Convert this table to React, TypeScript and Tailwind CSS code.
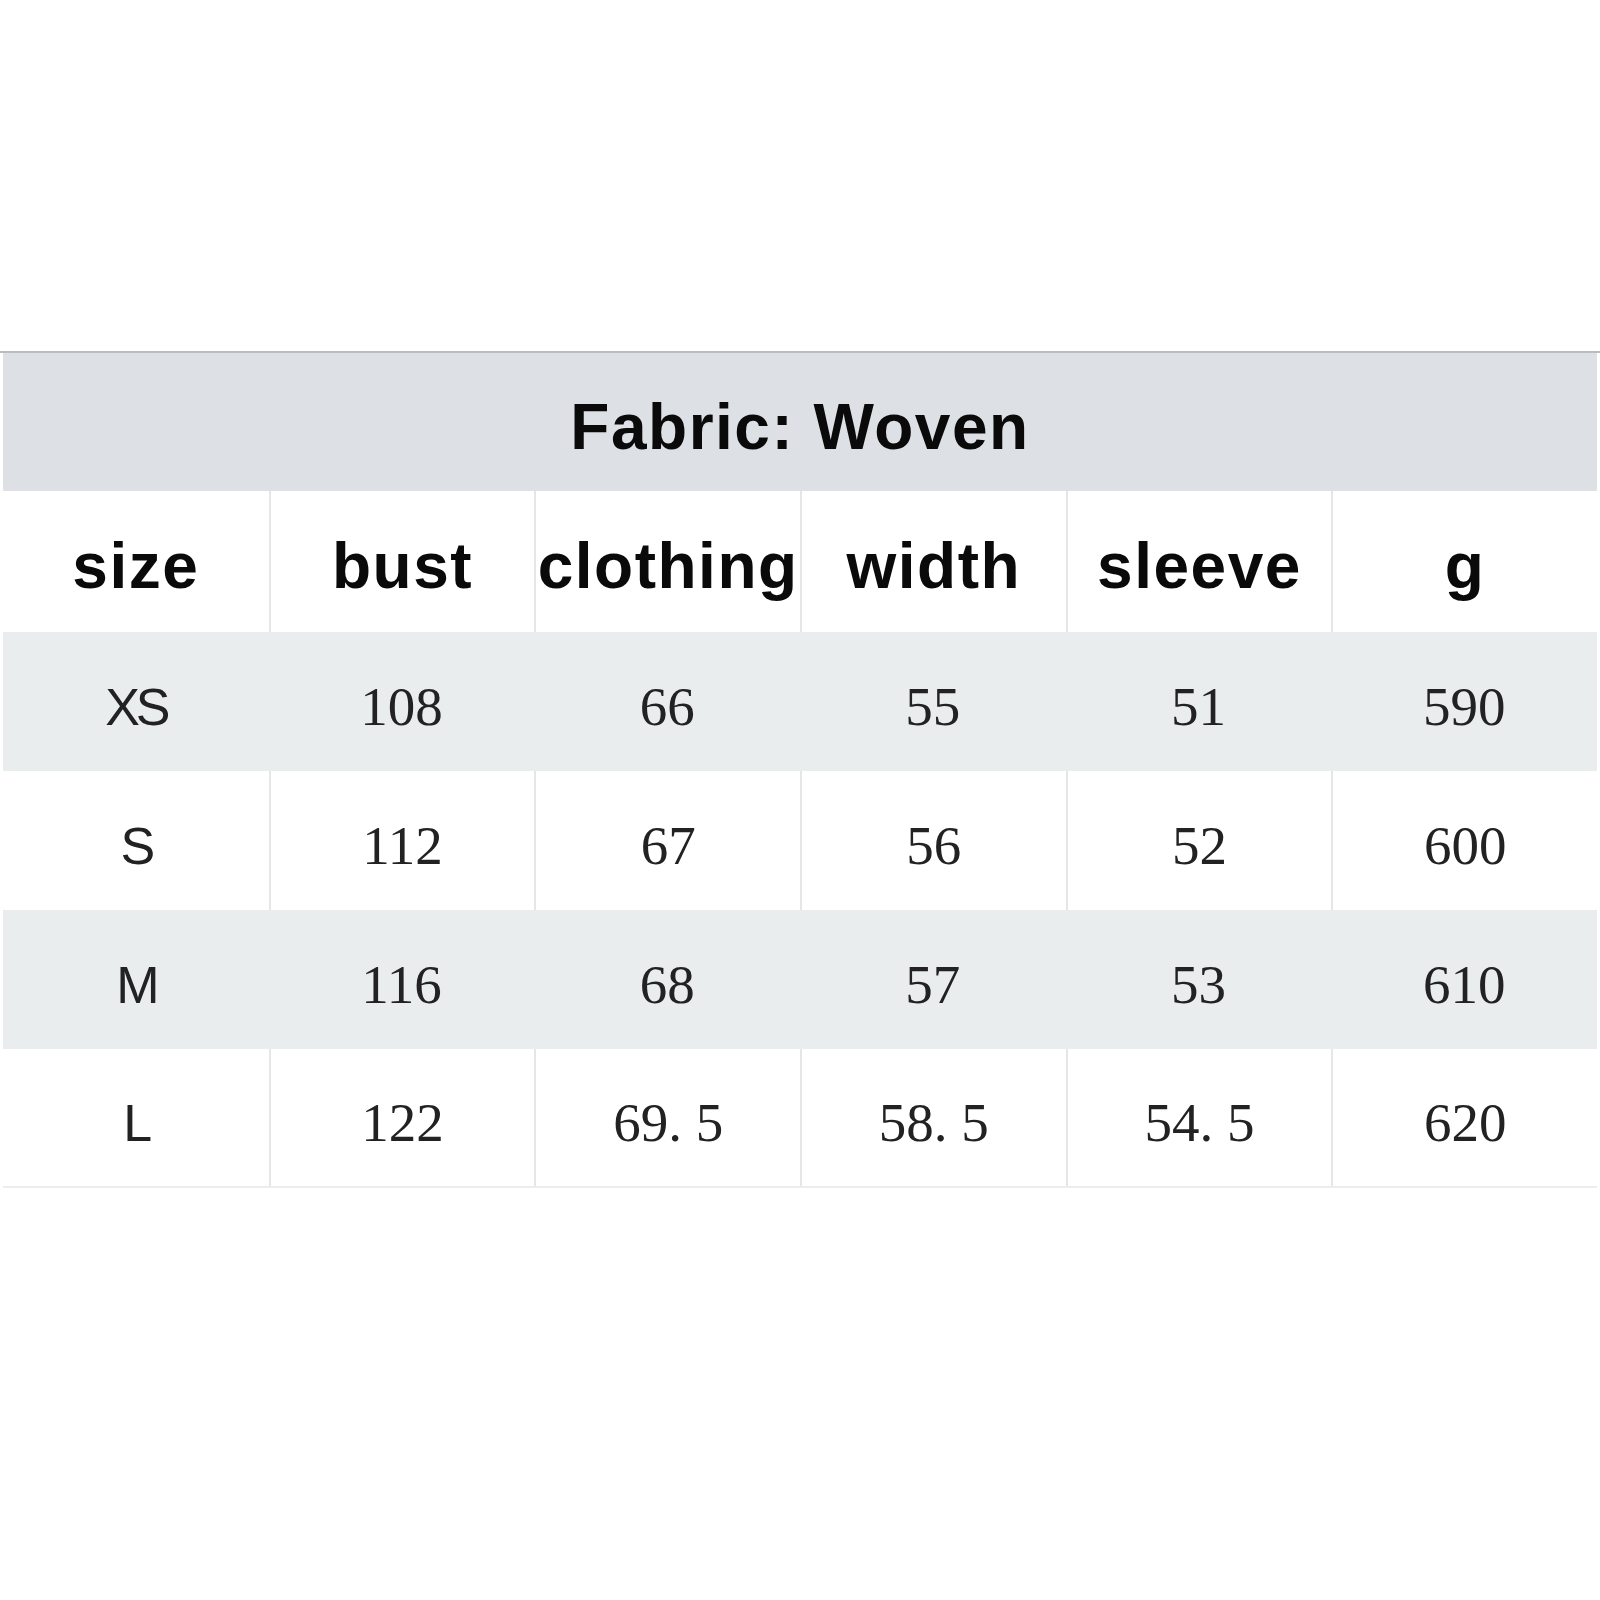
const headers = ['size', 'bust', 'clothing', 'width', 'sleeve', 'g'];

const rows = [
  { size: 'XS', values: ['108', '66', '55', '51', '590'] },
  { size: 'S', values: ['112', '67', '56', '52', '600'] },
  { size: 'M', values: ['116', '68', '57', '53', '610'] },
  { size: 'L', values: ['122', '69. 5', '58. 5', '54. 5', '620'] },
];

export default function App() {
  return (
    <div className="w-[1600px] h-[1600px] bg-white pt-[351px]">
      <div className="h-[2px] bg-[#bcbcbc]" />
      <div className="px-[3px]">
        <div className="h-[138px] bg-[#dde1e5] flex items-center justify-center">
          <span className="text-[64px] font-bold tracking-[1.5px] text-[#0a0a0a] font-['Liberation_Sans',Arial,sans-serif] leading-none pt-[10px]">
            Fabric: Woven
          </span>
        </div>

        <div className="grid grid-cols-6 h-[141px] bg-white">
          {headers.map((h, i) => (
            <div
              key={h}
              className={`flex items-center justify-center ${i > 0 ? 'border-l-2 border-[#e4e6e8]' : ''}`}
            >
              <span className="text-[64px] font-bold tracking-[1.5px] text-[#0a0a0a] font-['Liberation_Sans',Arial,sans-serif] leading-none pt-[8px]">
                {h}
              </span>
            </div>
          ))}
        </div>

        {rows.map((r, ri) => (
          <div
            key={r.size}
            className={`grid grid-cols-6 h-[139px] ${ri % 2 === 0 ? 'bg-[#e9eded]' : 'bg-white'} ${ri === rows.length - 1 ? 'border-b-2 border-[#eceeee]' : ''}`}
          >
            <div className="flex items-center justify-center">
              <span className="text-[52px] tracking-[-4px] text-[#222] font-['Liberation_Sans',Arial,sans-serif] font-light leading-none pt-[10px]">
                {r.size}
              </span>
            </div>
            {r.values.map((v, i) => (
              <div
                key={i}
                className={`flex items-center justify-center ${ri % 2 === 1 ? 'border-l-2 border-[#e4e6e8]' : ''}`}
              >
                <span className="text-[55px] text-[#222] font-['Liberation_Serif','Times_New_Roman',serif] leading-none pt-[10px]">
                  {v}
                </span>
              </div>
            ))}
          </div>
        ))}
      </div>
    </div>
  );
}
